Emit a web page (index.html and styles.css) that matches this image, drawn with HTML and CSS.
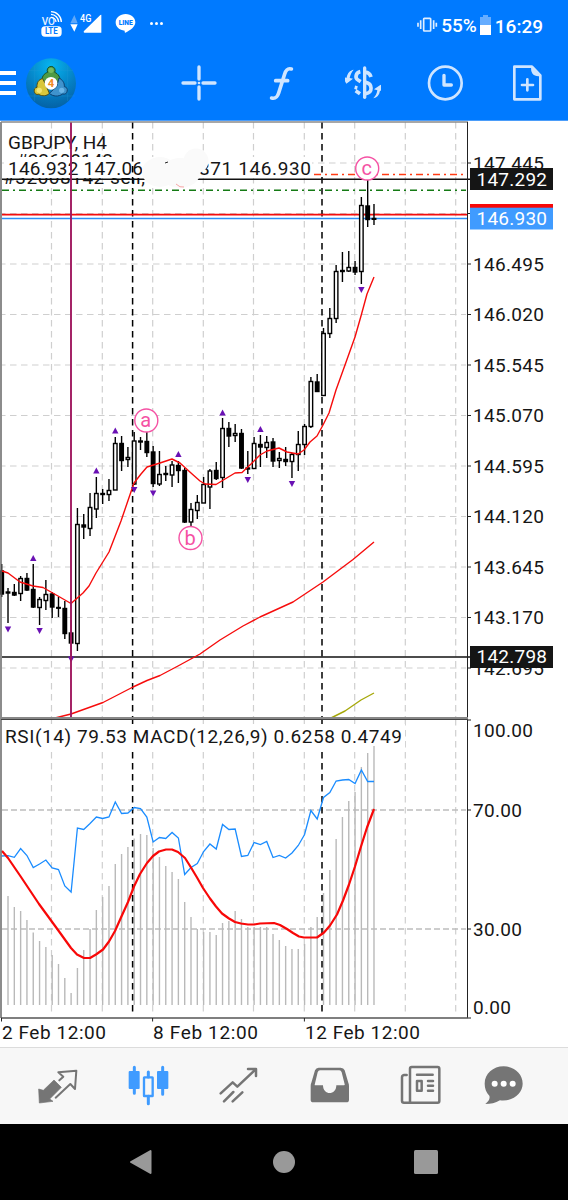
FILE: index.html
```html
<!DOCTYPE html>
<html lang="en">
<head>
  <meta charset="UTF-8">
  <meta name="viewport" content="width=device-width, initial-scale=1.0">
  <title>GBPJPY, H4</title>
  <link rel="stylesheet" href="styles.css">
</head>
<body>

  <header class="app-header">
    <div class="status-bar">
      <div class="status-left">
        <svg width="22" height="28" viewBox="122 30 66 84">
          <text class="volte" x="124" y="76" textLength="40" lengthAdjust="spacingAndGlyphs">VO</text>
          <path class="wave" d="M152 52a15 15 0 0 1 15 14M152 43a24 24 0 0 1 23 23M152 35a31 31 0 0 1 31 31"/>
          <rect x="123" y="79" width="61" height="31" rx="11" fill="#fff"/>
          <text class="lte" x="134" y="103" textLength="38" lengthAdjust="spacingAndGlyphs">LTE</text>
        </svg>
        <svg class="signal" width="32" height="28" viewBox="209 30 96 84">
          <path fill="#80b8f5" opacity=".75" d="M210 70l12-25 10 25z"/>
          <path fill="#fff" d="M210 73h22l-10 22zM303 44v54h-51q-4-2-1-5l49-48z"/>
          <text class="net" x="239" y="65" textLength="34" lengthAdjust="spacingAndGlyphs">4G</text>
        </svg>
        <svg class="line-app" width="22" height="28" viewBox="345 30 66 84">
          <path fill="#fff" d="M377 42c17 0 29 11 29 25 0 13-14 24-30 31-2 1-2-3-2-6-16-1-27-11-27-25s13-25 30-25z"/>
          <text class="line-text" x="356" y="75" textLength="42" lengthAdjust="spacingAndGlyphs">LINE</text>
        </svg>
        <span class="dots"><i></i><i></i><i></i></span>
      </div>
      <div class="status-right">
        <svg width="21" height="20" viewBox="402 45 63 60">
          <rect x="422" y="55" width="21" height="38" rx="2" fill="none" stroke="#e0eeff" stroke-width="5"/>
          <path d="M405 68v12M413 61v26M452 61v26M460 68v12" stroke="#e0eeff" stroke-width="5"/>
        </svg>
        <span class="battery-level">55%</span>
        <svg class="battery" width="12" height="21" viewBox="0 0 12 21">
          <path fill="#66adff" d="M3 0h5v2h3v9H0V2h3z"/>
          <path fill="#fff" d="M0 10h11v10H0z"/>
        </svg>
        <span class="clock">16:29</span>
      </div>
    </div>

    <div class="toolbar">
      <div class="menu"><i></i><i></i><i></i></div>
      <svg class="logo" width="50" height="51" viewBox="77 172 150 153">
        <defs>
          <radialGradient id="logoBg" cx=".5" cy=".15" r=".85">
            <stop offset="0" stop-color="#06b5f0"/>
            <stop offset=".6" stop-color="#0580c4"/>
            <stop offset="1" stop-color="#0462a6"/>
          </radialGradient>
        </defs>
        <circle cx="152" cy="248" r="75" fill="url(#logoBg)"/>
        <path d="M103 195v106M202 195v106M86 210h132M80 286h144" stroke="#2a9ad6" stroke-width="1.5" opacity=".6"/>
        <path d="M126 246c-5-17 7-29 16-31a12 12 0 1 1 21 0c10 4 19 15 15 31z" fill="#4e9a45" stroke="#17512a" stroke-width="3"/>
        <path d="M127 234c-12 2-18 12-17 26a10 10 0 0 0 5 21c11 7 25 5 32-3l-11-26z" fill="#d9c73b" stroke="#58500f" stroke-width="3"/>
        <path d="M176 232c10 5 17 14 16 26a10 10 0 0 1-5 22c-13 9-29 8-40-2l22-20z" fill="#3f93cd" stroke="#0c4070" stroke-width="3"/>
        <circle cx="152" cy="209" r="8" fill="#75bb60"/>
        <circle cx="117" cy="269" r="8" fill="#f1e474"/>
        <circle cx="184" cy="269" r="8" fill="#6cb6e8"/>
        <circle cx="152" cy="248" r="19" fill="#fff"/>
        <text class="logo-num" x="152" y="260">4</text>
      </svg>
      <div class="tools">
        <svg width="36" height="36" viewBox="542 194 108 108">
          <path d="M596 200v36M596 260v36M548 248h36M608 248h36" class="tool-line bold"/>
          <circle cx="596" cy="248" r="4" fill="#cfe5ff"/>
        </svg>
        <svg width="36" height="36" viewBox="788 194 108 108">
          <path d="M814 293c12 3 17-3 21-15l18-57c4-13 9-18 20-15M826 241h36" class="tool-line func"/>
        </svg>
        <svg width="36" height="36" viewBox="182 194 108 108">
          <path d="M241 203v88" class="tool-line bold"/>
          <path d="M228 214c-14 3-17 19-7 25l8 5" class="tool-line cut"/>
          <path d="M243 216c10 0 14 4 17 14" class="tool-line cut"/>
          <path d="M244 246c21 4 22 31 0 34" class="tool-line cut"/>
          <path d="M211 261l8 2M214 271l13 9" class="tool-line cut"/>
          <path class="tool-fill" d="M208 208c-11 2-19 10-21 24l-12-2 11 20 20-15-10-2c2-10 6-18 12-25zM267 294c11-2 18-10 20-23l13 2-11-20-20 14 10 3c-1 10-6 17-12 24z"/>
        </svg>
        <svg width="36" height="36" viewBox="428 194 108 108">
          <circle cx="483" cy="248" r="49" class="tool-line"/>
          <path d="M479 225v29h22" class="tool-line bold"/>
        </svg>
        <svg width="36" height="36" viewBox="674 194 108 108">
          <path d="M690 199h53l25 26v72h-78z" class="tool-line"/>
          <path d="M741 199l28 28c-20 4-32-10-28-28z" class="tool-fill"/>
          <path d="M729 237v33M713 254h33" class="tool-line"/>
        </svg>
      </div>
    </div>
  </header>

  <main class="chart">
    <svg id="chart" width="568" height="926" viewBox="0 121 568 926"></svg>
  </main>

  <nav class="tabs">
    <svg width="44" height="44" viewBox="106 69 132 132">
      <path d="M163 117l22 22-35 35 10 7-41 5-2-42 14 4z" fill="#757575" stroke="#757575" stroke-width="2" stroke-linejoin="round"/>
      <path d="M168 170l44-41 14 15 4-55-54 5 15 13-12 11" class="tab-line"/>
    </svg>
    <svg width="44" height="44" viewBox="379 71 132 132">
      <path d="M404 81v78M489 81v81M446 95v15M446 168v22" stroke="#3f9bff" stroke-width="9" stroke-linecap="round"/>
      <rect x="387" y="92" width="33" height="54" rx="3" fill="#3f9bff"/>
      <rect x="472" y="92" width="34" height="54" rx="3" fill="#3f9bff"/>
      <rect x="433" y="111" width="26" height="56" rx="1" fill="none" stroke="#3f9bff" stroke-width="7"/>
    </svg>
    <svg width="44" height="44" viewBox="650 71 132 132">
      <path d="M664 159l36-33 14 13 54-51M746 86h24v21M674 183l28-28M700 183l29-27" class="tab-line thick"/>
    </svg>
    <svg width="44" height="44" viewBox="70 71 132 132">
      <path fill="#757575" fill-rule="evenodd" d="M105 82h66q9 0 12 8l11 37q2 4 2 10v41q0 8-8 8H89q-8 0-8-8v-41q0-6 2-10l11-37q3-8 11-8zM109 90q-5 0-7 6l-9 37q0 2 2 2h23c0 31 40 31 40 0h23q3 0 2-3l-9-36q-2-6-7-6z"/>
    </svg>
    <svg width="44" height="44" viewBox="342 71 132 132">
      <path d="M378 186V85q0-5 5-5h78q5 0 5 5v97q0 5-5 5H360q-6 0-6-6v-70q0-6 6-7h8" class="tab-line thick"/>
      <path d="M399 103h47M432 122h15M432 136h15M432 151h15" class="tab-line thick"/>
      <path d="M399 122h14v29h-14z" class="tab-line thick"/>
    </svg>
    <svg width="44" height="44" viewBox="592 71 132 132">
      <path fill="#757575" d="M660 78c32 0 57 23 57 52s-31 55-68 50c-14 9-28 11-44 11 10-8 15-17 12-25-9-9-14-21-14-36 0-29 25-52 57-52z"/>
      <g fill="#fff"><circle cx="633" cy="130" r="9"/><circle cx="660" cy="130" r="9"/><circle cx="687" cy="130" r="9"/></g>
    </svg>
  </nav>

  <footer class="nav-bar">
    <svg width="28" height="28" viewBox="1 0 28 28"><path d="M4 14L23.5 3v22z" fill="#999" stroke="#999" stroke-width="2" stroke-linejoin="round"/></svg>
    <svg width="28" height="28" viewBox="0 0 28 28"><circle cx="14" cy="14" r="11" fill="#999"/></svg>
    <svg width="28" height="28" viewBox="0 0 28 28"><rect x="2" y="2" width="24" height="24" rx="1.5" fill="#999"/></svg>
  </footer>

  <script src="chart.js"></script>
</body>
</html>
```

FILE: styles.css
```css
body {
  margin: 0;
  width: 568px;
  height: 1200px;
  overflow: hidden;
  background: #fff;
  font-family: Roboto, sans-serif;
}

svg {
  display: block;
  flex: none;
}

/* header */
.app-header {
  height: 121px;
  box-sizing: border-box;
  background: #007aff;
  border-bottom: 1px solid #4b9dfa;
}

.status-bar {
  display: flex;
  justify-content: space-between;
  height: 48px;
  padding: 0 25px 0 41px;
  box-sizing: border-box;
  color: #fff;
}

.status-left {
  display: flex;
  padding-top: 10px;
}

.signal {
  margin-left: 7px;
}

.line-app {
  margin-left: 13px;
}

.dots {
  display: flex;
  gap: 2px;
  margin: 12px 0 0 13px;
}

.dots i {
  width: 3px;
  height: 3px;
  border-radius: 50%;
  background: #fff;
}

.volte {
  font-size: 33px;
  font-weight: 500;
  fill: #e8f2ff;
}

.wave {
  fill: none;
  stroke: #fff;
  stroke-width: 4;
}

.lte {
  font-size: 26px;
  font-weight: 700;
  fill: #007aff;
}

.net {
  font-size: 32px;
  font-weight: 500;
  fill: #fff;
}

.line-text {
  font-size: 20px;
  font-weight: 900;
  fill: #007aff;
}

.status-right {
  display: flex;
  align-items: flex-start;
  padding-top: 15px;
  font-size: 19px;
  font-weight: 500;
  line-height: 22px;
}

.battery-level {
  margin-left: 3px;
}

.battery {
  margin-left: 3px;
}

.clock {
  padding-top: 1px;
  margin-left: 3px;
}

.toolbar {
  display: flex;
  align-items: center;
  height: 70px;
}

.menu {
  display: flex;
  flex-direction: column;
  gap: 6px;
  width: 16px;
}

.menu i {
  height: 4px;
  background: #fff;
}

.logo {
  margin-left: 9.5px;
}

.logo-num {
  font-size: 34px;
  font-weight: 700;
  fill: #f08a24;
  text-anchor: middle;
}

.tools {
  display: flex;
  gap: 46px;
  margin-left: 105px;
}

.tool-line {
  fill: none;
  stroke: #cfe5ff;
  stroke-width: 8;
  stroke-linecap: round;
  stroke-linejoin: round;
}

.tool-line.bold {
  stroke-width: 10;
}

.tool-line.cut {
  stroke-width: 11;
  stroke-linecap: butt;
}

.tool-line.func {
  stroke-width: 11;
}

.tool-fill {
  fill: #cfe5ff;
}

/* chart */
.chart {
  height: 926px;
}

.chart text {
  font-size: 19px;
  fill: #161616;
}

.chart .inverse {
  fill: #fff;
}

.chart .wave-label {
  font-size: 20px;
  fill: #f552a4;
  text-anchor: middle;
}

.grid {
  stroke: #cfcfcf;
  stroke-width: 1.2;
  stroke-dasharray: 6.5 4.5;
}

.level {
  stroke: #bdbdbd;
  stroke-width: 1.3;
  stroke-dasharray: 6 3;
}

.period {
  stroke: #000;
  stroke-width: 1.5;
  stroke-dasharray: 6.5 4.5;
}

.candle {
  stroke: #000;
  stroke-width: 1.4;
}

.fractal {
  fill: #6a11b4;
}

.ma {
  fill: none;
  stroke: #f60c0c;
  stroke-width: 1.4;
  stroke-linejoin: round;
}

.ma.slow {
  stroke: #a6a80a;
}

.signal-line {
  fill: none;
  stroke: #f80808;
  stroke-width: 2.2;
  stroke-linejoin: round;
}

.rsi {
  fill: none;
  stroke: #1a8cff;
  stroke-width: 1.3;
}

.macd {
  stroke: #b9b9b9;
  stroke-width: 1.4;
}

/* bottom tabs */
.tabs {
  display: grid;
  grid-template-columns: repeat(5, 90.6px) 77px;
  justify-items: center;
  align-items: center;
  height: 77px;
  padding-left: 12px;
  box-sizing: border-box;
  background: #f7f7f7;
  border-top: 1px solid #dcdcdc;
}

.tab-line {
  fill: none;
  stroke: #757575;
  stroke-width: 6;
  stroke-linecap: round;
  stroke-linejoin: round;
}

.tab-line.thick {
  stroke-width: 7.5;
}

.nav-bar {
  display: flex;
  justify-content: center;
  align-items: center;
  gap: 114px;
  height: 76px;
  background: #000;
}
```

FILE: chart.js
```js
const svg = document.getElementById('chart');

function add(tag, attrs, text) {
  const node = document.createElementNS('http://www.w3.org/2000/svg', tag);
  for (const key in attrs) node.setAttribute(key, attrs[key]);
  if (text) node.textContent = text;
  svg.appendChild(node);
  return node;
}

function line(x1, y1, x2, y2, attrs) {
  add('line', { x1, y1, x2, y2, ...attrs });
}

function rect(x, y, width, height, fill) {
  add('rect', { x, y, width, height, fill });
}

// text stretched between two x positions
function label(text, x, end, y, cls = '') {
  add('text', { x, y, textLength: end - x, class: cls }, text);
}

const barX = i => 1.7 + 6.31 * i;

// high, body top, body bottom, low, filled
const candles = [
  [564, 571, 594, 597, 1], [588, 592, 593, 623, 1], [584, 592.5, 595, 596, 1], [576, 578.5, 593.5, 601, 0],
  [573, 578.5, 590, 591, 1], [564, 589.5, 607, 608, 1], [597, 599.5, 607.5, 625, 0], [580, 594.5, 600.5, 610, 0],
  [592, 594, 607, 618, 1], [597, 607.5, 608.2, 617, 1], [601, 608.5, 633.5, 639, 1], [620, 633, 643, 656, 1],
  [508, 524.5, 643.5, 651, 0], [514, 525, 527, 539, 1], [493, 507.5, 528.5, 536, 0], [477, 493.5, 509, 518, 0],
  [489, 493.5, 494.5, 504, 1], [479, 490.5, 494.5, 501, 0], [437, 443.5, 490, 490, 0], [436, 443.5, 460.5, 471, 1],
  [447, 457.5, 459.5, 467, 0], [432, 441, 484, 485, 0], [437, 441, 442, 450, 1], [432, 441.5, 452.5, 457, 1],
  [446, 452, 483.5, 487, 1], [451, 474.5, 484, 486, 0], [466, 473.5, 474.5, 481, 1], [461, 465, 475, 487, 0],
  [461, 465.5, 470.5, 483, 1], [468, 470.5, 522, 523, 1], [503, 509.5, 522, 526, 0], [495, 502.5, 510.5, 519, 0],
  [477, 484.5, 503, 503, 0], [469, 471, 487, 509, 0], [462, 470.5, 478.5, 480, 1], [418, 428.5, 477.5, 488, 0],
  [422, 428.5, 436, 447, 1], [424, 433.5, 435.5, 442, 0], [429, 433.5, 468, 469, 1], [451, 468, 469, 474, 1],
  [437, 443.5, 468.5, 469, 0], [435, 444.5, 447, 467, 1], [436, 442.5, 447.5, 458, 0], [438, 442, 461, 467, 1],
  [452, 458.5, 460.5, 468, 0], [447, 459.5, 461.5, 466, 1], [453, 454.5, 461.5, 478, 0], [431, 444.5, 454.5, 471, 0],
  [424, 426.5, 444.5, 455, 0], [377, 381.5, 426.5, 428, 0], [374, 382, 391.5, 392, 1], [328, 333.5, 395.5, 396, 0],
  [308, 318.5, 333.5, 338, 0], [265, 271.5, 318.5, 323, 0], [252, 270.5, 271.5, 282, 1], [251, 267.5, 271, 272, 0],
  [261, 267.5, 272, 275, 1], [197, 205.5, 271.5, 284, 0], [180, 206, 219.5, 227, 1], [204, 218.5, 219.3, 225, 1]
];

const macd = [
  null, 896, 907, 911, 920, 932.5, 941, 947, 955, 964, 978, 993, 968, 950, 929, 910, 897, 886, 864, 854,
  847, 838.5, 834, 835, 848, 857, 866, 872, 879, 902, 917, 929, 932, 932, 935, 923, 921, 911, 919, 927,
  927, 927, 927, 934, 940, 946, 949, 949, 944, 927, 917, 893, 870, 839, 817, 801, 792, 767, 753, 746
];

const rsi = [
  856, 855.7, 857.3, 848.5, 855.5, 867.5, 864, 860, 868, 869.5, 886, 892, 828, 829.5, 823.5, 817, 818.5, 817, 802, 813.5,
  813, 807.5, 808.5, 817, 842, 837.5, 838.5, 832.5, 838, 874.5, 867.5, 863.5, 851.5, 844, 849, 824.5, 829.5, 829, 856.5, 855.5,
  842.5, 844.5, 841.5, 857.5, 855.5, 858, 853, 845.5, 834.5, 810.5, 819, 797.5, 792.5, 781, 780, 779.5, 783.5, 770, 781.5, 781.5
];

const fastMa = '2,571 8,573 20,582 33,586 43,587.5 58,596 71,603.5 83,593 89,586 96,573 109,552 121,521 134,483 141,474 147,467 160,463 172,459 180,463 191,473 200,481 205,484 216,484.5 225,479 235,473 242,472.5 251,464 260,455 267,451 279,448 287,452 298,454 304,450 310,442 317,436 323,425 329,413 336,390 345,365 355,337 361,316 367,294 374,277';
const midMa = '55,718 71,714 103,702.5 133,687 147,680.5 160,675.5 178,666 200,654 220,640 243,626 260,617 293,602 323,582 353,559.5 374,542';
const signal = '2,851 8,858 21,877 39,904 58,930 71,948 77,954.5 84,958 90,958 96,954.5 103,949.5 109,941.5 115,931 121,917.5 128,902 134,886.5 140,874 147,863 153,856 159,851.5 166,849.5 172,849.5 178,852 185,858 191,867.5 197,877.5 203,888 210,898.5 216,906.5 222,913.5 229,918.5 235,922 241,923.5 248,924.5 254,924.5 260,923.5 274,923 280,925 287,929 293,933 299,936.5 304,937.5 317,937.5 324,932.5 330,925.5 337,914.5 343,900.5 349,884.5 355,866.5 361,846.5 367,827.5 374,809';

const gridX = [51.5, 102.3, 152.7, 203.3, 253.5, 304.3, 354.7, 405.3, 455.7];
const prices = ['147.445', '', '146.495', '146.020', '145.545', '145.070', '144.595', '144.120', '143.645', '143.170', '142.695'];

// grid
gridX.forEach(x => {
  line(x, 122, x, 717, { class: 'grid' });
  line(x, 720, x, 1013, { class: 'grid', 'stroke-dashoffset': 1 });
});
prices.forEach((price, i) => {
  const y = 163 + 50.5 * i;
  line(2, y, 466, y, { class: 'grid', 'stroke-dashoffset': 3 });
  line(467, y, 471, y, { stroke: '#222' });
  if (price) label(price, 473, 544, y + 6.7);
});
[810, 929].forEach(y => {
  line(2, y, 466, y, { class: 'level' });
  line(467, y, 471, y, { stroke: '#222' });
});

// order captions and symbol info
label('#32608142', 16, 113, 167);
label('#32608142 sell,', 3, 145, 184);
rect(4, 157, 308, 21, '#fff');
label('GBPJPY, H4', 8, 107, 149.3);
[132.6, 322].forEach(x => line(x, 122, x, 717, { class: 'period' }));
label('146.932 147.06', 8, 143, 174.5);
label('871 146.930', 199, 311, 174.5);

// price levels
line(2, 179.2, 470, 179.2, { stroke: '#111', 'stroke-width': 1.6 });
line(2, 190.3, 466, 190.3, { stroke: '#157a15', 'stroke-width': 1.4, 'stroke-dasharray': '7 4 2 4' });
line(314, 174.5, 466, 174.5, { stroke: '#ff3c14', 'stroke-width': 1.4, 'stroke-dasharray': '7 4 2 4' });
line(2, 214.6, 468, 214.6, { stroke: '#f40d0d', 'stroke-width': 1.6 });
line(2, 218.5, 468, 218.5, { stroke: '#2b8ef8', 'stroke-width': 1.5 });
line(2, 657, 470, 657, { stroke: '#111', 'stroke-width': 1.6 });

// erased part of the caption
add('ellipse', { cx: 160, cy: 172, rx: 18, ry: 15, fill: '#fafafa' });
add('ellipse', { cx: 180, cy: 173, rx: 20, ry: 15, fill: '#fafafa' });
add('circle', { cx: 196, cy: 161, r: 12.5, fill: '#fafafa' });
add('path', { d: 'M176 184q4 4 8 3', stroke: '#f7a5a5', fill: 'none' });
add('path', { d: 'M165 163l3-1', stroke: '#222', fill: 'none' });

// candles
candles.forEach(([high, top, bottom, low, filled], i) => {
  const x = barX(i);
  line(x, high, x, low, { class: 'candle' });
  add('rect', {
    x: x - 1.75, y: top, width: 3.5, height: bottom - top,
    class: 'candle', fill: filled ? '#000' : '#fff'
  });
});

add('polyline', { points: fastMa, class: 'ma' });
add('polyline', { points: midMa, class: 'ma' });
add('polyline', { points: '331,718 345,711 361,700 374,693', class: 'ma slow' });

[[5, 558], [15, 470.5], [18, 430.5], [28, 454], [35, 412.5], [41, 429]].forEach(([i, y]) => {
  add('path', { d: `M${barX(i)} ${y - 3}l3.2 6h-6.4z`, class: 'fractal' });
});
[[1, 629.5], [6, 631], [11, 659.5], [21, 490], [24, 493.5], [39, 480], [46, 484], [57, 290]].forEach(([i, y]) => {
  add('path', { d: `M${barX(i)} ${y + 3}l3.2-6h-6.4z`, class: 'fractal' });
});

[['a', 146.3, 420.5], ['b', 190.5, 538], ['c', 367.2, 168.5]].forEach(([letter, x, y]) => {
  add('circle', { cx: x, cy: y, r: 11.5, fill: '#fff', stroke: '#f552a4', 'stroke-width': 1.4 });
  add('text', { x: x - 0.5, y: y + (letter === 'b' ? 6.8 : 6), class: 'wave-label' }, letter);
});

line(71, 122, 71, 717, { stroke: '#a0195f', 'stroke-width': 1.9 });

// indicator panel
macd.forEach((y, i) => {
  if (y) line(barX(i), y, barX(i), 1005, { class: 'macd' });
});
rect(4, 724, 401, 28, '#fff');
line(374, 746, 374, 752, { class: 'macd' });
[132.6, 322].forEach(x => {
  line(x, 720, x, 724, { class: 'period' });
  line(x, 752, x, 1013, { class: 'period' });
});
add('polyline', { points: rsi.map((y, i) => `${barX(i)},${y}`).join(' '), class: 'rsi' });
add('polyline', { points: signal, class: 'signal-line' });
label('RSI(14) 79.53 MACD(12,26,9) 0.6258 0.4749', 5, 402, 742.7);

// frames
line(1, 122, 1, 1018, { stroke: '#666', 'stroke-width': 1.5 });
line(1, 122, 468, 122, { stroke: '#8a8a8a', 'stroke-width': 1.4 });
line(467.5, 122, 467.5, 1018, { stroke: '#222' });
line(1, 718, 468, 718, { stroke: '#888', 'stroke-width': 2 });
line(1, 719.5, 468, 719.5, { stroke: '#444' });
line(468, 720, 471, 720, { stroke: '#222' });
line(1, 1018, 468, 1018, { stroke: '#555', 'stroke-width': 1.3 });
line(468, 1018, 471, 1018, { stroke: '#222' });
[1.5, 152.6, 304.4].forEach(x => line(x, 1018, x, 1021.5, { stroke: '#222' }));

// price tags
rect(470, 168, 83, 22, '#151515');
label('147.292', 476.5, 547, 185.7, 'inverse');
rect(470, 204, 83, 4, '#f80808');
rect(470, 207.7, 83, 21.8, '#409bff');
label('146.930', 476.5, 547, 225.4, 'inverse');
rect(470, 646, 83, 22, '#151515');
label('142.798', 476.5, 547, 663.4, 'inverse');

label('100.00', 473, 533, 737.3);
label('70.00', 473, 522, 816.5);
label('30.00', 473, 522, 935.5);
label('0.00', 473, 511, 1013.5);

label('2 Feb 12:00', 2, 106, 1038.7);
label('8 Feb 12:00', 153, 258, 1038.7);
label('12 Feb 12:00', 305, 420, 1038.7);
```
